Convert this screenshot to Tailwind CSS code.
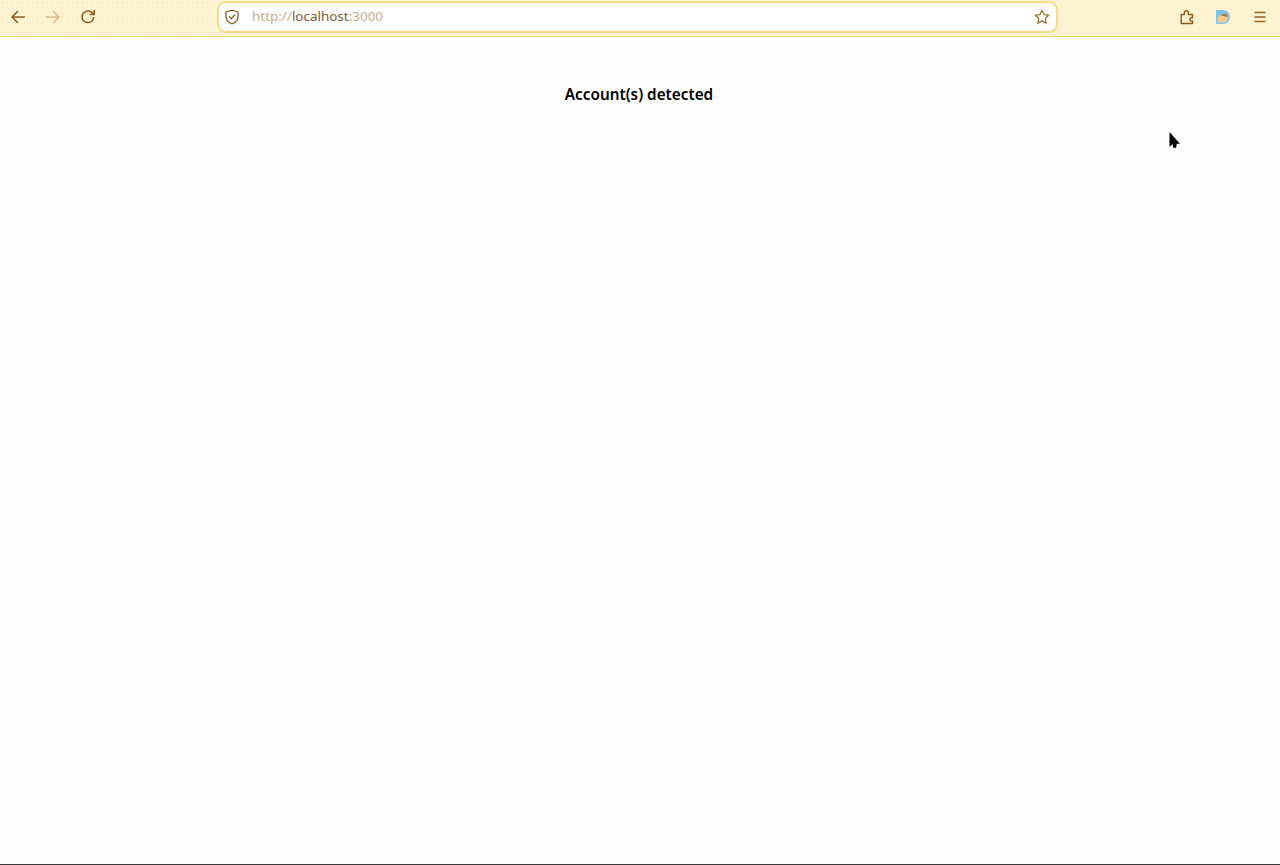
<!DOCTYPE html>
<html lang="en">
<head>
    <meta charset="UTF-8">
    <title>localhost:3000</title>
    <script src="https://cdn.jsdelivr.net/npm/@tailwindcss/browser@4"></script>
</head>
<body class="relative h-[865px] w-[1280px] overflow-hidden bg-[#fefefe] font-['Noto_Sans',sans-serif]">
    <!-- browser toolbar -->
    <header class="flex h-[37px] items-center border-b border-[#f2d56e] bg-[#fdf3d0] pb-[2px]">
        <div class="flex h-[34px] w-[217px] items-center bg-[radial-gradient(#fae2b2_0.7px,transparent_0.8px)] bg-[length:5px_5px] pl-[10px]">
            <button class="flex h-4 w-4 items-center justify-center text-[#8f5a1e]">
                <svg viewBox="0 0 16 16" class="h-4 w-4" fill="none" stroke="currentColor" stroke-width="1.5" stroke-linecap="round" stroke-linejoin="round"><path d="M14.5 8H2M7.5 2.5 2 8l5.5 5.5"/></svg>
            </button>
            <button class="ml-[19px] flex h-4 w-4 items-center justify-center text-[#dcb98a]">
                <svg viewBox="0 0 16 16" class="h-4 w-4" fill="none" stroke="currentColor" stroke-width="1.5" stroke-linecap="round" stroke-linejoin="round"><path d="M1.5 8H14M8.5 2.5 14 8l-5.5 5.5"/></svg>
            </button>
            <button class="ml-[19px] flex h-4 w-4 items-center justify-center text-[#8f5a1e]">
                <svg viewBox="0 0 16 16" class="-ml-px h-4 w-4" fill="none" stroke="currentColor" stroke-width="1.5" stroke-linecap="round" stroke-linejoin="round"><path d="M13.6 8.8A5.8 5.8 0 1 1 12 3.6L14 5.6M14.2 1.6v4h-4"/></svg>
            </button>
        </div>

        <div class="flex h-[32px] w-[841px] items-center rounded-[9px] border-2 border-[#f9d987] bg-white pr-[6px] pl-[6px]">
            <svg viewBox="0 0 16 16" class="-ml-px h-4 w-4 shrink-0 text-[#8f5a1e]" fill="none" stroke="currentColor" stroke-width="1.3" stroke-linecap="round" stroke-linejoin="round"><path d="M8 1.2 14 3v4.6c0 3.4-2.6 6-6 7.2-3.4-1.200-6-3.800-6-7.200V3z"/><path d="M5.400 7.800 7.300 9.800 10.800 6"/></svg>
            <span class="ml-[12px] text-[13.450px] leading-none text-[#c4ab8e]">http://<span class="text-[#7d5a30]">localhost</span>:3000</span>
            <svg viewBox="0 0 16 16" class="ml-auto h-4 w-4 shrink-0 text-[#9c6a34]" fill="none" stroke="currentColor" stroke-width="1.2" stroke-linejoin="round"><path d="m8 1.300 2.050 4.300 4.650.6-3.400 3.250.85 4.650L8 11.850 3.850 14.100l.85-4.650L1.300 6.200l4.650-.6z"/></svg>
        </div>

        <div class="flex h-[34px] flex-1 items-center bg-[radial-gradient(#fbe9c2_0.6px,transparent_0.7px)] bg-[length:6px_6px] pl-[121px]">
            <svg viewBox="0 0 16 16" class="h-4 w-4 text-[#8f5a1e]" fill="none" stroke="currentColor" stroke-width="1.4" stroke-linejoin="round"><path d="M2.200 14.500V5.500h3.200V3.700a2 2 0 0 1 4 0v1.800h4.100v3.300h-1.700a1.800 1.800 0 0 0 0 3.200h1.700v2.500z"/></svg>
            <svg viewBox="0 0 16 16" class="ml-5 h-4 w-4" >
                <path d="M1 1h7a7 7 0 0 1 7 7 7 7 0 0 1-7 7H1z" fill="#7cc4ee"/>
                <path d="M2.500 10C3 6.500 7 4.500 13.500 7.500 13.500 11 11 13.500 8 13.500H2.500z" fill="#f6c987"/>
                <path d="M6 7c1.500-3 5-3 6.500-.5.5.6.7 1 .7 1.500C11 7.500 9 7 6 7z" fill="#b57a28"/>
            </svg>
            <svg viewBox="0 0 16 16" class="ml-[21px] h-4 w-4 text-[#9c6226]" fill="none" stroke="currentColor" stroke-width="1.300"><path d="M2.500 3.500h11M2.500 8h11M2.500 12.500h11"/></svg>
        </div>
    </header>

    <main class="pt-[47px] text-center">
        <h1 class="pr-[2px] text-[15.300px] leading-5 font-semibold text-black">Account(s) detected</h1>
    </main>

    <!-- mouse pointer -->
    <svg viewBox="0 0 14 20" class="absolute top-[131px] left-[1168px] h-5 w-[14px]"><path d="M1.500 1v15l3.500-3.500 7 .2z" fill="#000"/><path d="M4.500 11l4.500 1-1 5-3-.5z" fill="#000"/></svg>

    <div class="absolute inset-x-0 bottom-0 h-px bg-[#3a3a3a]"></div>
</body>
</html>
